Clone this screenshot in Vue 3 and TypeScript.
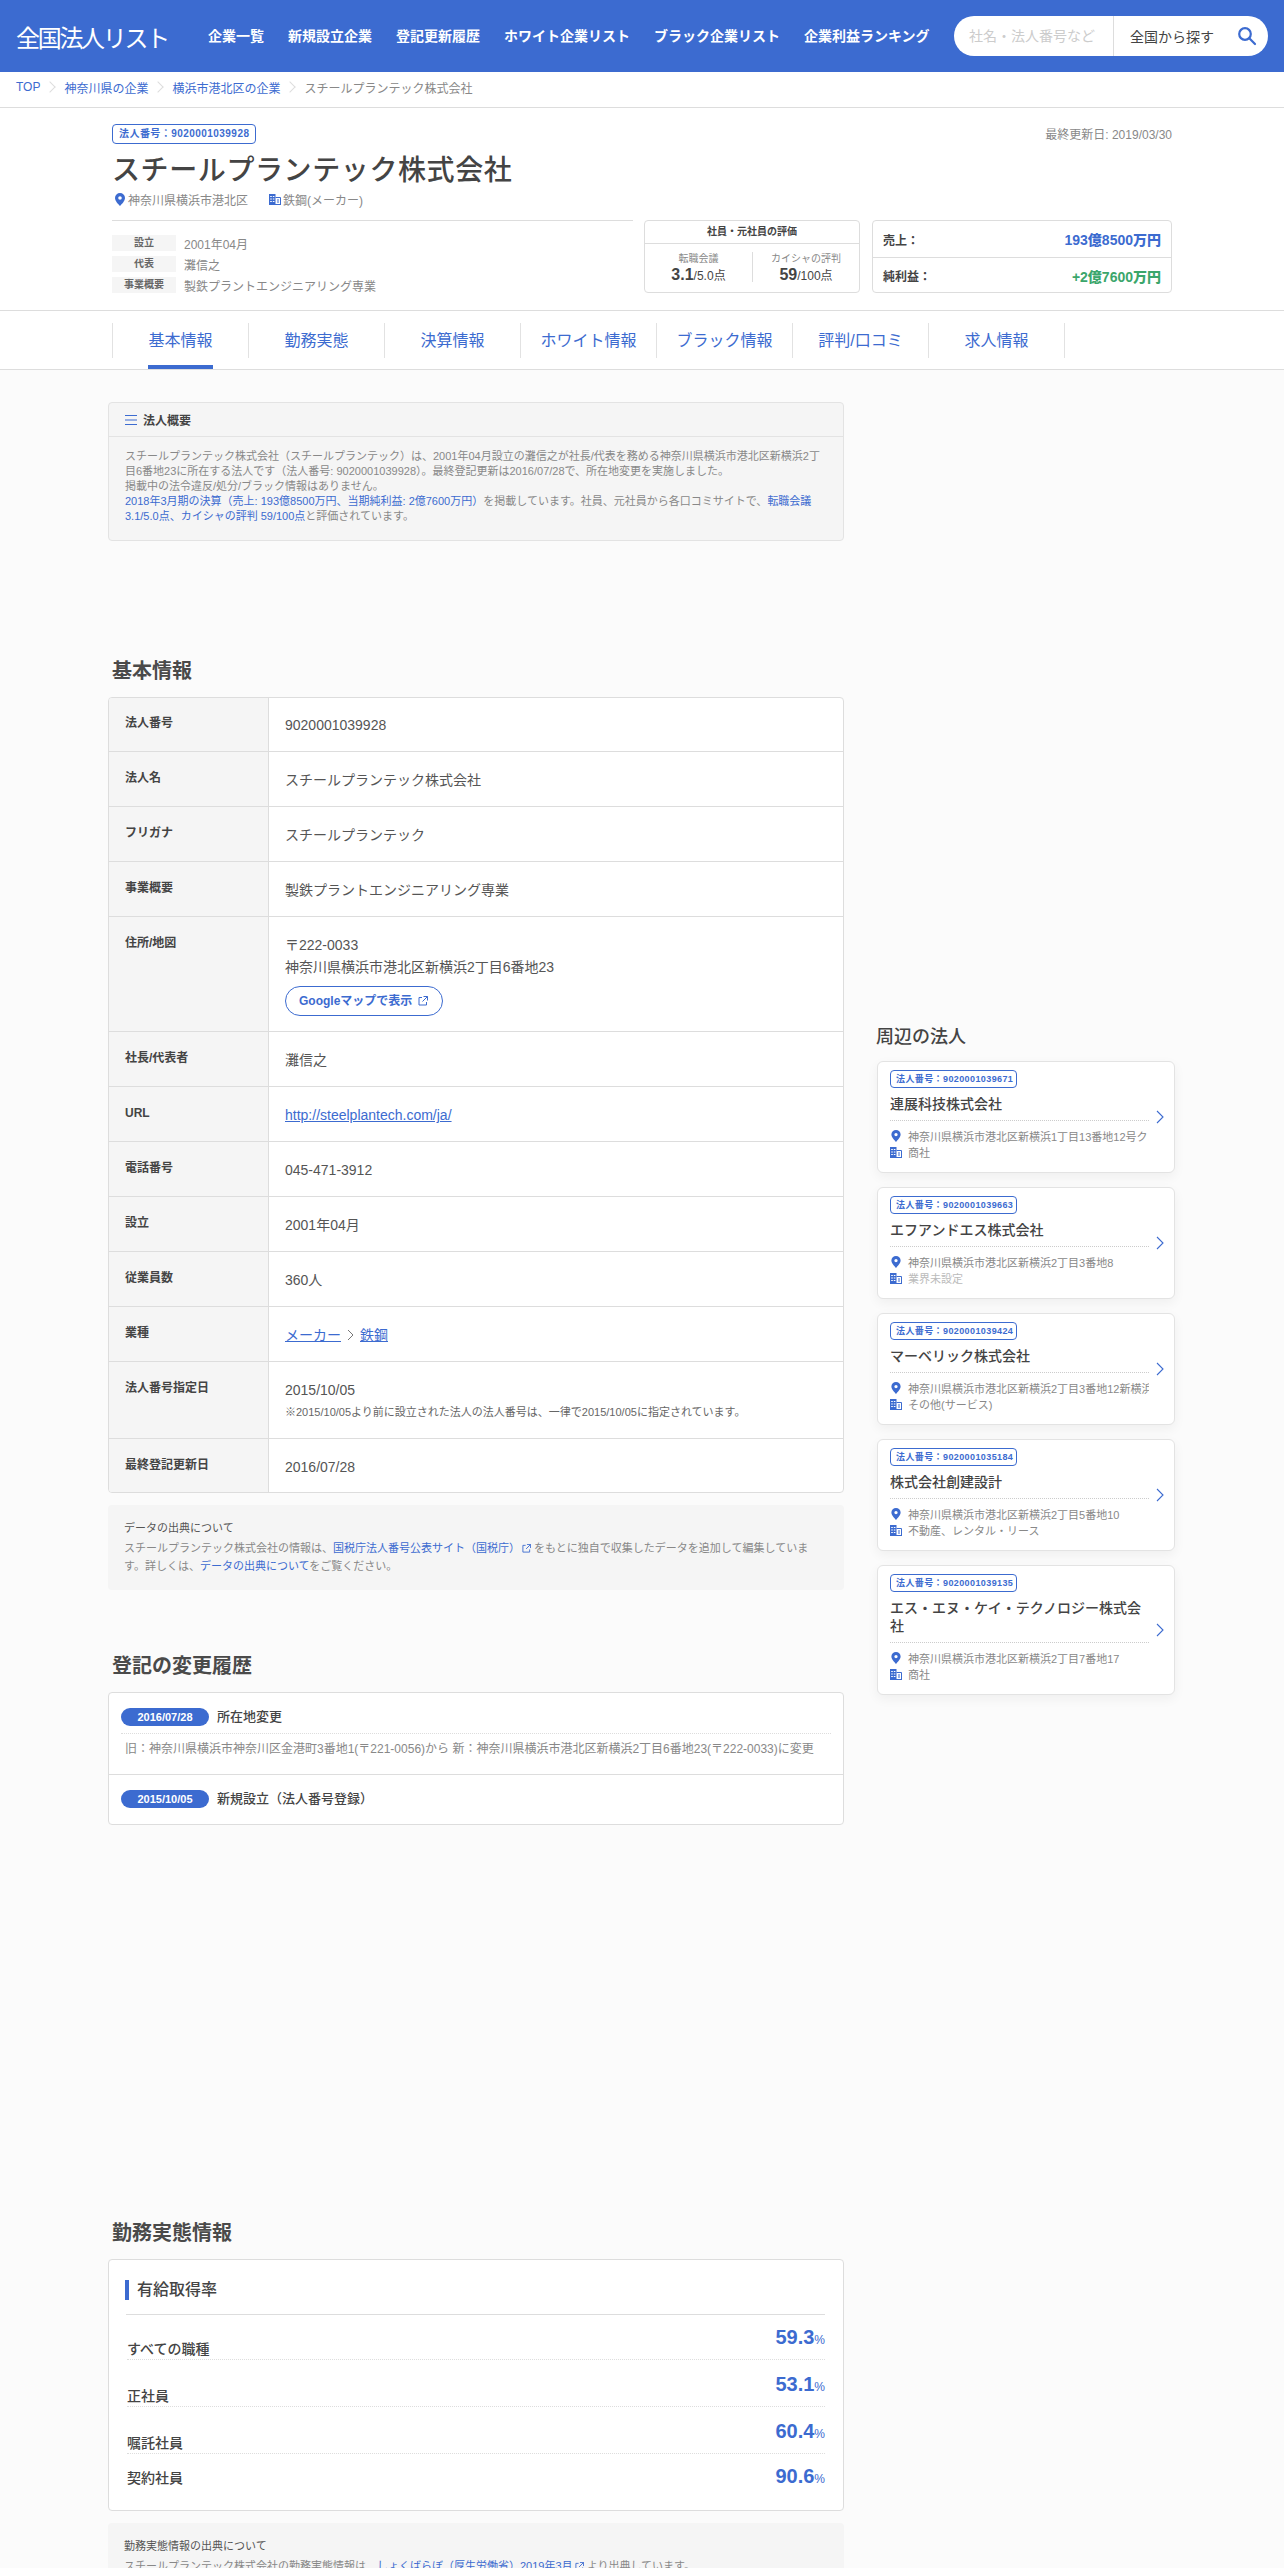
<script setup lang="ts">
interface Row { label: string; value?: string; kind?: string }
const nav: string[] = ['企業一覧', '新規設立企業', '登記更新履歴', 'ホワイト企業リスト', 'ブラック企業リスト', '企業利益ランキング']
const tabs: string[] = ['基本情報', '勤務実態', '決算情報', 'ホワイト情報', 'ブラック情報', '評判/口コミ', '求人情報']
const meta = [
  { k: '設立', v: '2001年04月' },
  { k: '代表', v: '灘信之' },
  { k: '事業概要', v: '製鉄プラントエンジニアリング専業' },
]
const rows: Row[] = [
  { label: '法人番号', value: '9020001039928' },
  { label: '法人名', value: 'スチールプランテック株式会社' },
  { label: 'フリガナ', value: 'スチールプランテック' },
  { label: '事業概要', value: '製鉄プラントエンジニアリング専業' },
  { label: '住所/地図', kind: 'address' },
  { label: '社長/代表者', value: '灘信之' },
  { label: 'URL', kind: 'url' },
  { label: '電話番号', value: '045-471-3912' },
  { label: '設立', value: '2001年04月' },
  { label: '従業員数', value: '360人' },
  { label: '業種', kind: 'industry' },
  { label: '法人番号指定日', kind: 'date' },
  { label: '最終登記更新日', value: '2016/07/28' },
]
const rates = [
  { k: 'すべての職種', v: '59.3' },
  { k: '正社員', v: '53.1' },
  { k: '嘱託社員', v: '60.4' },
  { k: '契約社員', v: '90.6' },
]
const nearby = [
  { no: '9020001039671', name: '連展科技株式会社', addr: '神奈川県横浜市港北区新横浜1丁目13番地12号クリオ新横浜', ind: '商社', unset: false },
  { no: '9020001039663', name: 'エフアンドエス株式会社', addr: '神奈川県横浜市港北区新横浜2丁目3番地8', ind: '業界未設定', unset: true },
  { no: '9020001039424', name: 'マーベリック株式会社', addr: '神奈川県横浜市港北区新横浜2丁目3番地12新横浜', ind: 'その他(サービス)', unset: false },
  { no: '9020001035184', name: '株式会社創建設計', addr: '神奈川県横浜市港北区新横浜2丁目5番地10', ind: '不動産、レンタル・リース', unset: false },
  { no: '9020001039135', name: 'エス・エヌ・ケイ・テクノロジー株式会社', addr: '神奈川県横浜市港北区新横浜2丁目7番地17', ind: '商社', unset: false },
]
</script>

<template>
  <div class="page">
    <header class="header">
      <div class="logo">全国法人リスト</div>
      <nav class="nav"><a v-for="n in nav" :key="n">{{ n }}</a></nav>
      <div class="search">
        <div class="search-input">社名・法人番号など</div>
        <div class="search-area">全国から探す</div>
        <svg class="search-icon" width="20" height="20" viewBox="0 0 20 20" fill="none" stroke="#3c6bd0" stroke-width="2.2"><circle cx="8" cy="8" r="5.8" /><path d="M12.3 12.3 18 18" stroke-linecap="round" /></svg>
      </div>
    </header>

    <div class="crumbs">
      <a>TOP</a><i class="sep"></i><a>神奈川県の企業</a><i class="sep"></i><a>横浜市港北区の企業</a><i class="sep"></i><span>スチールプランテック株式会社</span>
    </div>

    <section class="head">
      <div class="head-top">
        <span class="badge">法人番号：9020001039928</span>
        <span class="updated">最終更新日: 2019/03/30</span>
      </div>
      <h1 class="title">スチールプランテック株式会社</h1>
      <div class="place">
        <svg width="10" height="13" viewBox="0 0 10 13"><path fill="#3c6bd0" fill-rule="evenodd" d="M5 0a5 5 0 0 1 5 5c0 3-3.200 6-5 8-1.800-2-5-5-5-8a5 5 0 0 1 5-5Zm0 3.200a1.800 1.800 0 1 0 0 3.600 1.800 1.800 0 0 0 0-3.600Z" /></svg>
        <span class="place-text">神奈川県横浜市港北区</span>
        <svg class="bld" width="12" height="12" viewBox="0 0 12 12"><path fill="#3c6bd0" d="M0 1h6.500v10H0zM0 11h12v1H0z" /><path fill="none" stroke="#3c6bd0" d="M6.500 4.500h5V11" /><path fill="#fff" d="M1.200 3h1.600v1H1.200zM3.800 3h1.600v1H3.800zM1.200 5.500h1.600v1H1.200zM3.800 5.500h1.600v1H3.800zM1.200 8h1.600v1H1.200zM3.800 8h1.600v1H3.800z" /><path fill="#3c6bd0" d="M8 6.500h2v1H8zM8 8.500h2v1H8z" /></svg>
        <span>鉄鋼(メーカー)</span>
      </div>
      <div class="summary">
        <div class="meta">
          <div v-for="m in meta" :key="m.k" class="meta-row"><span class="meta-k">{{ m.k }}</span><span>{{ m.v }}</span></div>
        </div>
        <div class="rating">
          <div class="rating-head">社員・元社員の評価</div>
          <div class="rating-body">
            <div class="rating-col"><div class="rating-k">転職会議</div><div class="rating-v"><b>3.1</b>/5.0点</div></div>
            <div class="rating-col"><div class="rating-k">カイシャの評判</div><div class="rating-v"><b>59</b>/100点</div></div>
          </div>
        </div>
        <div class="finance">
          <div class="fin-row"><span>売上：</span><b class="blue">193億8500万円</b></div>
          <div class="fin-row"><span>純利益：</span><b class="green">+2億7600万円</b></div>
        </div>
      </div>
    </section>

    <nav class="tabs">
      <a v-for="(t, i) in tabs" :key="t" class="tab" :class="{ active: i === 0 }"><span>{{ t }}</span></a>
    </nav>

    <main class="main">
      <div class="left">
        <section class="overview">
          <div class="overview-head">
            <svg width="12" height="10" viewBox="0 0 12 10" fill="none" stroke="#3c6bd0"><path d="M0 .5h12M0 5h12M0 9.500h12" /></svg>
            <span>法人概要</span>
          </div>
          <p class="overview-text">スチールプランテック株式会社（スチールプランテック）は、2001年04月設立の灘信之が社長/代表を務める神奈川県横浜市港北区新横浜2丁目6番地23に所在する法人です（法人番号: 9020001039928）。最終登記更新は2016/07/28で、所在地変更を実施しました。<br>掲載中の法令違反/処分/ブラック情報はありません。<br><a>2018年3月期の決算（売上: 193億8500万円、当期純利益: 2億7600万円）</a>を掲載しています。社員、元社員から各口コミサイトで、<a>転職会議3.1/5.0点、カイシャの評判 59/100点</a>と評価されています。</p>
        </section>

        <h2 class="h2 first">基本情報</h2>
        <div class="table">
          <div v-for="r in rows" :key="r.label" class="tr">
            <div class="th">{{ r.label }}</div>
            <div class="td">
              <template v-if="r.kind === 'address'">
                <div>〒222-0033</div>
                <div>神奈川県横浜市港北区新横浜2丁目6番地23</div>
                <a class="map-btn">Googleマップで表示
                  <svg width="10" height="10" viewBox="0 0 10 10" fill="none" stroke="#3c6bd0"><path d="M4 1.500H1v7.500h7.500V6M5.500.5h4v4M9.500.5 4.500 5.500" /></svg>
                </a>
              </template>
              <a v-else-if="r.kind === 'url'" class="link">http://steelplantech.com/ja/</a>
              <template v-else-if="r.kind === 'industry'">
                <a class="link">メーカー</a>
                <svg class="ind-sep" width="7" height="12" viewBox="0 0 7 12" fill="none" stroke="#777"><path d="m1 1 5 5-5 5" /></svg>
                <a class="link">鉄鋼</a>
              </template>
              <template v-else-if="r.kind === 'date'">
                <div>2015/10/05</div>
                <div class="note">※2015/10/05より前に設立された法人の法人番号は、一律で2015/10/05に指定されています。</div>
              </template>
              <template v-else>{{ r.value }}</template>
            </div>
          </div>
        </div>
        <div class="source">
          <div class="source-title">データの出典について</div>
          <p>スチールプランテック株式会社の情報は、<a>国税庁法人番号公表サイト（国税庁）<svg class="ext" width="9" height="9" viewBox="0 0 10 10" fill="none" stroke="#3c6bd0"><path d="M4 1.500H1v7.500h7.500V6M5.500.5h4v4M9.500.5 4.500 5.500" /></svg></a> をもとに独自で収集したデータを追加して編集しています。詳しくは、<a>データの出典について</a>をご覧ください。</p>
        </div>

        <h2 class="h2 second">登記の変更履歴</h2>
        <div class="history">
          <div class="hist-row">
            <div class="hist-top"><span class="date-pill">2016/07/28</span><b>所在地変更</b></div>
            <div class="hist-text">旧：神奈川県横浜市神奈川区金港町3番地1(〒221-0056)から 新：神奈川県横浜市港北区新横浜2丁目6番地23(〒222-0033)に変更</div>
          </div>
          <div class="hist-row">
            <div class="hist-top last"><span class="date-pill">2015/10/05</span><b>新規設立（法人番号登録）</b></div>
          </div>
        </div>

        <h2 class="h2 third">勤務実態情報</h2>
        <div class="work">
          <div class="work-title">有給取得率</div>
          <div class="rate-list">
            <div v-for="r in rates" :key="r.k" class="rate-row">
              <span class="rate-k">{{ r.k }}</span>
              <span class="rate-v">{{ r.v }}<small>%</small></span>
            </div>
          </div>
        </div>
        <div class="source work-source">
          <div class="source-title">勤務実態情報の出典について</div>
          <p>スチールプランテック株式会社の勤務実態情報は、<a>しょくばらぼ（厚生労働省）2019年3月<svg class="ext" width="9" height="9" viewBox="0 0 10 10" fill="none" stroke="#3c6bd0"><path d="M4 1.500H1v7.500h7.500V6M5.500.5h4v4M9.500.5 4.500 5.500" /></svg></a> より出典しています。</p>
        </div>
      </div>

      <aside class="side">
        <h2 class="side-title">周辺の法人</h2>
        <div class="cards">
          <article v-for="c in nearby" :key="c.no" class="card">
            <span class="badge small">法人番号：{{ c.no }}</span>
            <div class="card-name">{{ c.name }}</div>
            <div class="card-info">
              <div class="info-row">
                <svg width="9" height="12" viewBox="0 0 10 13"><path fill="#3c6bd0" fill-rule="evenodd" d="M5 0a5 5 0 0 1 5 5c0 3-3.200 6-5 8-1.800-2-5-5-5-8a5 5 0 0 1 5-5Zm0 3.200a1.800 1.800 0 1 0 0 3.600 1.800 1.800 0 0 0 0-3.600Z" /></svg>
                <span>{{ c.addr }}</span>
              </div>
              <div class="info-row">
                <svg width="12" height="12" viewBox="0 0 12 12"><path fill="#3c6bd0" d="M0 1h6.500v10H0zM0 11h12v1H0z" /><path fill="none" stroke="#3c6bd0" d="M6.500 4.500h5V11" /><path fill="#fff" d="M1.200 3h1.600v1H1.200zM3.800 3h1.600v1H3.800zM1.200 5.500h1.600v1H1.200zM3.800 5.500h1.600v1H3.800zM1.200 8h1.600v1H1.200zM3.800 8h1.600v1H3.800z" /><path fill="#3c6bd0" d="M8 6.500h2v1H8zM8 8.500h2v1H8z" /></svg>
                <span :class="{ unset: c.unset }">{{ c.ind }}</span>
              </div>
            </div>
            <svg class="chev" width="8" height="14" viewBox="0 0 8 14" fill="none" stroke="#3c6bd0" stroke-width="1.100"><path d="m1 1 6 6-6 6" /></svg>
          </article>
        </div>
      </aside>
    </main>
  </div>
</template>

<style>
html, body { margin: 0; padding: 0; background: #fbfbfb; }
</style>

<style scoped>
* { box-sizing: border-box; }
.page { height: 2568px; overflow: hidden; font-family: "Liberation Sans", "Noto Sans CJK JP", sans-serif; color: #444; background: #fbfbfb; }
a { color: #3c6bd0; text-decoration: none; }
p { margin: 0; }

.header { height: 72px; background: #3c6bd0; display: flex; align-items: center; padding: 0 16px; }
.logo { width: 192px; color: #fff; font-size: 24px; font-weight: 400; letter-spacing: -2.300px; }
.nav { display: flex; gap: 24px; width: 746px; margin-top: -2px; }
.nav a { color: #fff; font-size: 14px; font-weight: 700; white-space: nowrap; }
.search { margin-left: auto; width: 314px; height: 40px; background: #fff; border-radius: 20px; display: flex; align-items: center; font-size: 14px; position: relative; }
.search-input { width: 160px; height: 100%; line-height: 40px; padding-left: 15px; color: #ccc; border-right: 1px solid #ddd; }
.search-area { padding-left: 16px; color: #444; }
.search-icon { position: absolute; right: 11px; top: 10px; }

.crumbs { height: 36px; background: #fff; border-bottom: 1px solid #ddd; display: flex; align-items: center; padding: 0 16px 5px; font-size: 12px; color: #888; }
.sep { width: 24px; height: 14px; position: relative; }
.sep::after { content: ""; position: absolute; left: 6px; top: 3px; width: 7px; height: 7px; border-top: 1px solid #ddd; border-right: 1px solid #ddd; transform: rotate(45deg); }

.head { height: 203px; background: #fff; border-bottom: 1px solid #ddd; padding: 16px 112px 0; }
.head-top { display: flex; justify-content: space-between; align-items: center; height: 20px; }
.badge { display: inline-block; height: 20px; line-height: 18px; padding: 0 6px; border: 1px solid #3c6bd0; border-radius: 4px; color: #3c6bd0; font-size: 10px; font-weight: 700; letter-spacing: .45px; white-space: nowrap; }
.updated { font-size: 12px; color: #888; margin-top: -2px; }
.title { margin: 7px 0 0; font-size: 28px; line-height: 40px; font-weight: 500; color: #444; letter-spacing: .6px; }
.place { display: flex; align-items: center; height: 18px; margin-top: -1px; font-size: 12px; color: #888; padding-left: 3px; }
.place-text { margin-left: 3px; }
.bld { margin-left: 21px; margin-right: 2px; }
.summary { display: flex; margin-top: 12px; }
.meta { width: 521px; border-top: 1px solid #ddd; padding-top: 14px; display: flex; flex-direction: column; gap: 5px; }
.meta-row { display: flex; align-items: center; height: 16px; font-size: 12px; color: #888; }
.meta-k { width: 64px; height: 16px; line-height: 16px; background: #f5f5f5; font-size: 10px; font-weight: 700; color: #666; text-align: center; margin-right: 8px; }
.rating { width: 216px; height: 73px; margin-left: 11px; border: 1px solid #ddd; border-radius: 4px; }
.rating-head { height: 23px; line-height: 22px; text-align: center; font-size: 10px; font-weight: 700; border-bottom: 1px solid #ddd; }
.rating-body { display: flex; padding-top: 8px; }
.rating-col { width: 50%; height: 30px; text-align: center; }
.rating-col + .rating-col { border-left: 1px solid #ddd; }
.rating-k { font-size: 10px; line-height: 14px; color: #888; }
.rating-v { font-size: 12px; line-height: 18px; }
.rating-v b { font-size: 16px; }
.finance { width: 300px; height: 73px; margin-left: 12px; border: 1px solid #ddd; border-radius: 4px; font-size: 12px; font-weight: 700; }
.fin-row { height: 36px; display: flex; justify-content: space-between; align-items: center; padding: 0 10px; }
.fin-row + .fin-row { border-top: 1px solid #ddd; }
.fin-row b { font-size: 14px; }
.blue { color: #3c6bd0; }
.green { color: #3ba66b; }

.tabs { height: 59px; background: #fff; border-bottom: 1px solid #ddd; padding: 12px 112px 0; display: flex; align-items: flex-start; }
.tab { width: 136px; height: 35px; border-left: 1px solid #e2e2e2; text-align: center; font-size: 16px; }
.tab:last-child { border-right: 1px solid #e2e2e2; width: 137px; }
.tab span { display: inline-block; height: 46px; line-height: 35px; }
.tab.active span { border-bottom: 4px solid #3c6bd0; }

.main { display: grid; grid-template-columns: 736px 298px; column-gap: 33px; align-items: start; padding: 32px 0 0 108px; }
.overview { height: 139px; background: #f5f5f5; border: 1px solid #e3e3e3; border-radius: 4px; }
.overview-head { height: 34px; border-bottom: 1px solid #e3e3e3; display: flex; align-items: center; gap: 6px; padding-left: 16px; font-size: 12px; font-weight: 700; }
.overview-text { padding: 12px 16px 0; font-size: 11px; line-height: 15px; color: #888; }

.h2 { margin: 0 0 11px 4px; font-size: 20px; line-height: 30px; font-weight: 700; color: #4a4a4a; }
.first { margin-top: 115px; }
.second { margin-top: 61px; }
.third { margin-top: 393px; }

.table { background: #fff; border: 1px solid #ddd; border-radius: 4px; overflow: hidden; }
.tr { display: flex; border-bottom: 1px solid #ddd; }
.tr:first-child { margin-top: -1px; }
.tr:last-child { border-bottom: 0; }
.tr:last-child .td { padding-bottom: 14px; }
.th { width: 160px; flex: none; background: #f5f5f5; border-right: 1px solid #ddd; padding: 17px 16px; font-size: 12px; line-height: 18px; font-weight: 700; }
.td { flex: 1; padding: 17px 16px 15px; font-size: 14px; line-height: 22px; color: #555; }
.map-btn { display: flex; width: 158px; align-items: center; gap: 6px; height: 30px; margin-top: 8px; padding-left: 13px; border: 1px solid #3c6bd0; border-radius: 15px; font-size: 12px; font-weight: 700; }
.link { text-decoration: underline; }
.ind-sep { margin: 0 6px; vertical-align: -1px; }
.note { font-size: 11px; color: #666; }

.source { margin-top: 12px; height: 85px; background: #f5f5f5; border-radius: 4px; padding: 14px 16px 0; font-size: 11px; line-height: 18px; color: #888; }
.source-title { color: #555; margin-bottom: 2px; }
.ext { margin-left: 2px; vertical-align: -1px; }

.history { height: 133px; background: #fff; border: 1px solid #ddd; border-radius: 4px; }
.hist-row { padding: 15px 12px 0; }
.hist-row:first-child { height: 82px; border-bottom: 1px solid #ddd; }
.hist-top { display: flex; gap: 8px; height: 26px; align-items: flex-start; border-bottom: 1px dotted #ddd; font-size: 13px; line-height: 18px; }
.hist-top.last { border-bottom: 0; }
.hist-top b { font-weight: 500; }
.date-pill { width: 88px; height: 18px; border-radius: 9px; background: #3c6bd0; color: #fff; text-align: center; font-size: 11px; font-weight: 700; line-height: 18px; }
.hist-text { font-size: 12px; line-height: 18px; color: #888; padding: 6px 4px 0; white-space: nowrap; }

.work { height: 252px; background: #fff; border: 1px solid #ddd; border-radius: 4px; padding: 20px 18px 0; }
.work-title { height: 35px; margin-left: -1px; border-bottom: 1px solid #ddd; position: relative; padding-left: 11px; font-size: 16px; line-height: 20px; font-weight: 500; }
.work-title::before { content: ""; position: absolute; left: -1px; top: 0; width: 4px; height: 20px; background: #3c6bd0; }
.rate-list { margin-top: -2px; }
.rate-row { height: 47px; display: flex; justify-content: space-between; align-items: flex-end; border-bottom: 1px dotted #ddd; position: relative; }
.rate-row:last-child { border-bottom: 0; align-items: center; }
.rate-k { font-size: 14px; line-height: 20px; font-weight: 500; }
.rate-v { align-self: flex-start; margin-top: 9px; font-size: 20px; line-height: 30px; font-weight: 700; color: #3c6bd0; }
.rate-row:last-child .rate-v { align-self: center; margin-top: 0; }
.rate-v small { font-size: 12px; font-weight: 400; }
.work-source { height: 80px; }

.side { margin-top: 620px; }
.side-title { margin: 0 0 9px -1px; font-size: 18px; line-height: 30px; font-weight: 500; color: #444; }
.cards { display: flex; flex-direction: column; gap: 14px; }
.card { position: relative; background: #fff; border: 1px solid #e3e3e3; border-radius: 6px; box-shadow: 0 4px 12px rgba(0, 0, 0, .05); padding: 8px 25px 12px 12px; }
.badge.small { display: block; width: 127px; height: 18px; line-height: 16px; font-size: 9px; padding: 0 5px; letter-spacing: .4px; }
.card-name { margin-top: 7px; padding-bottom: 7px; border-bottom: 1px dotted #ccc; font-size: 14px; line-height: 18px; font-weight: 500; color: #444; }
.card-info { padding-top: 7px; }
.info-row { display: flex; align-items: center; height: 16px; font-size: 11px; color: #888; overflow: hidden; white-space: nowrap; }
.info-row svg { flex: none; width: 12px; margin-right: 6px; }
.unset { color: #bbb; }
.chev { position: absolute; right: 10px; top: 50%; margin-top: -7px; }
</style>
